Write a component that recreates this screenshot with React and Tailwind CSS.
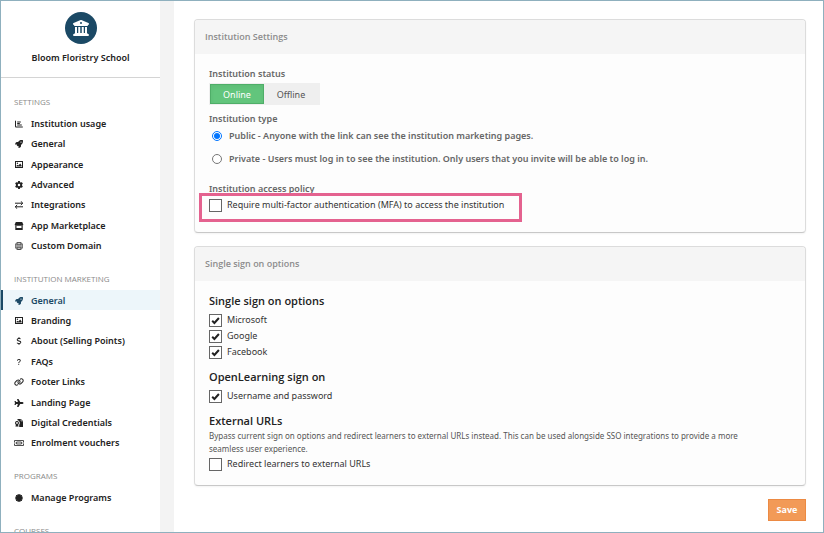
import React from "react";
import {
  FaChartBar,
  FaRocket,
  FaGear,
  FaDollarSign,
  FaLink,
  FaPlane,
  FaCertificate,
  FaBuildingColumns
} from "react-icons/fa6";
import { BsGlobe, BsQuestionLg } from "react-icons/bs";

function ImageIcon({ className }) {
  return (
    <svg viewBox="0 0 10 8" className={className} fill="currentColor">
      <path fillRule="evenodd" d="M1 0h8v7H1zM2 1v5h6V1z" />
      <circle cx="3.4" cy="2.3" r=".7" />
      <path d="M2.4 5.6V4.8l1.1-1 .9.7L6.2 2.6l1.4 1.8v1.2z" />
    </svg>
  );
}

function ExchangeIcon({ className }) {
  return (
    <svg viewBox="0 0 10 8" className={className} fill="none" stroke="currentColor" strokeWidth="1">
      <path d="M1 2.2h7.6M6.8.3l2 1.9-2 1.9M9 5.8H1.4M3.2 3.9l-2 1.9 2 1.9" />
    </svg>
  );
}

function ShopIcon({ className }) {
  return (
    <svg viewBox="0 0 10 8" className={className} fill="currentColor">
      <path d="M1.8 0h6.4l1.1 2.4c0 .9-.5 1.3-1.1 1.3H1.8C1.2 3.7.7 3.3.7 2.4z" />
      <path fillRule="evenodd" d="M1.3 4h7.4v4H1.3zM2.5 4v2h5V4z" />
    </svg>
  );
}

function CredentialIcon({ className }) {
  return (
    <svg viewBox="0 0 10 8" className={className} fill="currentColor">
      <path d="M3.5 0H7l2 2v6H5.2V5.8A2.8 2.8 0 0 0 3.5 1.3z" />
      <path fillRule="evenodd" d="M3 1.9a2 2 0 0 1 1.3 3.5V8L3 7.3 1.7 8V5.4A2 2 0 0 1 3 1.9zM3 3a.9.9 0 1 0 0 1.8A.9.9 0 0 0 3 3z" />
      <path d="M7 .2V2h1.8" fill="none" stroke="#fff" strokeWidth=".5" />
    </svg>
  );
}

function TicketIcon({ className }) {
  return (
    <svg viewBox="0 0 10 8" className={className} fill="none" stroke="currentColor" strokeWidth=".8">
      <path d="M.5 1.5h9v1.6a1 1 0 0 0 0 1.8v1.6h-9V4.9a1 1 0 0 0 0-1.8z" />
      <path d="M2.6 3h4.8v2H2.6z" />
    </svg>
  );
}

const settingsItems = [
  { label: "Institution usage", icon: FaChartBar },
  { label: "General", icon: FaRocket },
  { label: "Appearance", icon: ImageIcon },
  { label: "Advanced", icon: FaGear },
  { label: "Integrations", icon: ExchangeIcon },
  { label: "App Marketplace", icon: ShopIcon },
  { label: "Custom Domain", icon: BsGlobe }
];

const marketingItems = [
  { label: "General", icon: FaRocket, active: true },
  { label: "Branding", icon: ImageIcon },
  { label: "About (Selling Points)", icon: FaDollarSign },
  { label: "FAQs", icon: BsQuestionLg },
  { label: "Footer Links", icon: FaLink },
  { label: "Landing Page", icon: FaPlane },
  { label: "Digital Credentials", icon: CredentialIcon },
  { label: "Enrolment vouchers", icon: TicketIcon }
];

const programItems = [{ label: "Manage Programs", icon: FaCertificate }];

function NavSection({ title, items, height }) {
  return (
    <section>
      <h2 className="pt-4 pb-1 pl-[13px] font-['Open_Sans',sans-serif] text-[8px] leading-[14px] text-[#8a8a8a] uppercase">
        {title}
      </h2>
      <ul className={`grid auto-rows-fr ${height}`}>
        {items.map((item) => {
          const Icon = item.icon;
          return (
            <li key={item.label} className="grid">
              <a
                href="#"
                className={`flex items-center border-l-2 pt-px pl-[11px] text-[9px] leading-[14px] font-semibold ${
                  item.active ? "border-[#1b4965] bg-[#edf6fa] text-[#1b4965]" : "border-transparent text-[#222]"
                }`}
              >
                <Icon className="mr-[7px] h-2 w-[10px] shrink-0" />
                {item.label}
              </a>
            </li>
          );
        })}
      </ul>
    </section>
  );
}

function Card({ title, children }) {
  return (
    <section className="overflow-hidden rounded-[4px] border border-[#dcdcdc] border-b-[#c8c8c8] bg-[#fdfdfd] shadow-xs">
      <h2 className="bg-[#f5f5f5] px-[10px] py-[10px] font-['Open_Sans',sans-serif] text-[9px] leading-[14px] font-semibold text-[#8c8c8c]">
        {title}
      </h2>
      {children}
    </section>
  );
}

function Checkbox({ label, checked, children }) {
  return (
    <label className="relative flex h-4 w-fit items-center gap-[5px] text-[9px] text-[#333]">
      <span className="grid">
        <input
          type="checkbox"
          defaultChecked={checked}
          className="peer col-start-1 row-start-1 h-[13px] w-[13px] appearance-none border border-[#666] bg-white"
        />
        <svg
          viewBox="0 0 13 13"
          className="pointer-events-none invisible col-start-1 row-start-1 h-[13px] w-[13px] peer-checked:visible"
          fill="none"
          stroke="#222"
          strokeWidth="2"
        >
          <path d="M3.2 6.8 L5.4 9 L9.9 4" />
        </svg>
      </span>
      {label}
      {children}
    </label>
  );
}

export default function App() {
  return (
    <div className="flex h-screen overflow-hidden border border-[#8fb0be] bg-white font-['Noto_Sans',sans-serif]">
      <aside className="w-[159px] shrink-0">
        <header className="mb-px flex flex-col items-center border-b border-[#d4d4d4] pt-[11px] pb-3">
          <div className="flex h-8 w-8 items-center justify-center rounded-full bg-[#1b4965] text-white">
            <FaBuildingColumns className="h-4 w-4" />
          </div>
          <h1 className="mt-[7px] text-[9px] leading-[14px] font-semibold text-[#222]">Bloom Floristry School</h1>
        </header>
        <nav>
          <NavSection title="Settings" items={settingsItems} height="h-[143px]" />
          <NavSection title="Institution marketing" items={marketingItems} height="h-[163px]" />
          <NavSection title="Programs" items={programItems} height="h-[21px]" />
          <NavSection title="Courses" items={[]} height="h-0" />
        </nav>
      </aside>

      <div className="w-[14px] shrink-0 bg-[#f3f3f3]" />

      <main className="flex min-w-0 flex-1 flex-col gap-[13px] pt-[18px] pr-[17px] pl-5">
        <Card title="Institution Settings">
          <form className="px-[14px] pt-[13px] pb-[18px] text-[9px] leading-[14px] font-semibold text-[#666]">
            <h3>Institution status</h3>
            <div className="mt-[2px] flex w-[111px] bg-[#efefef] pl-px">
              <button
                type="button"
                className="my-px h-5 w-[54px] border border-[#4fae68] bg-[#62c57c] pt-px text-[9px] font-normal text-white shadow-inner"
              >
                Online
              </button>
              <button type="button" className="my-px h-5 w-[54px] pt-px text-[9px] font-normal text-[#555]">
                Offline
              </button>
            </div>

            <h3 className="mt-[7px]">Institution type</h3>
            <label className="mt-[3px] flex items-center gap-[7px] pl-[3px]">
              <input type="radio" name="type" defaultChecked className="h-[10px] w-[10px] accent-[#0075ff]" />
              Public - Anyone with the link can see the institution marketing pages.
            </label>
            <label className="mt-[9px] flex items-center gap-[7px] pl-[3px]">
              <input type="radio" name="type" className="h-[10px] w-[10px]" />
              Private - Users must log in to see the institution. Only users that you invite will be able to log in.
            </label>

            <h3 className="mt-4 mb-px">Institution access policy</h3>
            <div className="pb-px font-normal">
              <Checkbox label="Require multi-factor authentication (MFA) to access the institution">
                <span className="pointer-events-none absolute -top-1 -right-[18px] -bottom-[9px] -left-[10px] border-[3px] border-[#e4628f]" />
              </Checkbox>
            </div>
          </form>
        </Card>

        <Card title="Single sign on options">
          <form className="px-[14px] pt-3 pb-[13px]">
            <h3 className="mb-[3px] font-['Open_Sans',sans-serif] text-[11px] leading-4 font-semibold text-[#222]">
              Single sign on options
            </h3>
            <Checkbox label="Microsoft" checked />
            <Checkbox label="Google" checked />
            <Checkbox label="Facebook" checked />
            <h3 className="mt-[9px] mb-[3px] font-['Open_Sans',sans-serif] text-[11px] leading-4 font-semibold text-[#222]">
              OpenLearning sign on
            </h3>
            <Checkbox label="Username and password" checked />
            <h3 className="mt-[9px] font-['Open_Sans',sans-serif] text-[11px] leading-4 font-semibold text-[#222]">
              External URLs
            </h3>
            <p className="mb-px pr-5 text-[8px] leading-[13px] text-[#555]">
              Bypass current sign on options and redirect learners to external URLs instead. This can be used alongside
              SSO integrations to provide a more seamless user experience.
            </p>
            <Checkbox label="Redirect learners to external URLs" />
          </form>
        </Card>

        <button
          type="submit"
          className="h-[22px] w-[38px] self-end border border-[#ec8a43] bg-[#f29a57] font-['Open_Sans',sans-serif] text-[9px] font-bold text-white"
        >
          Save
        </button>
      </main>
    </div>
  );
}
